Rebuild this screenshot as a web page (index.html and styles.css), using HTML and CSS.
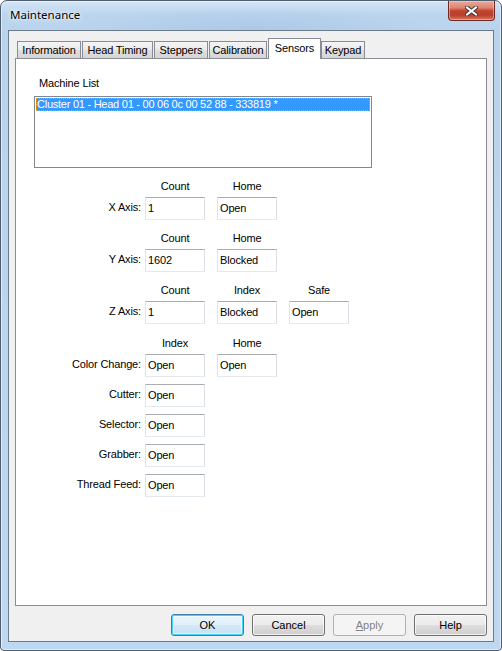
FILE: index.html
```html
<!DOCTYPE html>
<html lang="en">
<head>
<meta charset="utf-8">
<title>Maintenance</title>
<link rel="stylesheet" href="styles.css">
</head>
<body>
<div class="window">
  <div class="titlebar">
    <span class="title">Maintenance</span>
    <button class="close" type="button" aria-label="Close">
      <svg width="13" height="10" viewBox="0 0 13 10">
        <path d="M2 1.5 L11 8.5 M11 1.5 L2 8.5" stroke="#3a3a3a" stroke-width="4" stroke-linecap="square" fill="none"/>
        <path d="M2 1.5 L11 8.5 M11 1.5 L2 8.5" stroke="#ffffff" stroke-width="2" stroke-linecap="square" fill="none"/>
      </svg>
    </button>
  </div>

  <div class="client">
    <div class="tabs">
      <div class="tab tab-info">Information</div>
      <div class="tab tab-timing">Head Timing</div>
      <div class="tab tab-steppers">Steppers</div>
      <div class="tab tab-calib">Calibration</div>
      <div class="tab tab-sensors active">Sensors</div>
      <div class="tab tab-keypad">Keypad</div>
    </div>

    <div class="panel">
      <div class="list-label">Machine List</div>
      <div class="listbox">
        <div class="list-item selected">Cluster 01 - Head 01 - 00 06 0c 00 52 88 - 333819 *</div>
      </div>

      <div class="sensors">
        <div class="group">
          <span class="hdr"></span>
          <span class="hdr">Count</span>
          <span class="hdr">Home</span>
          <label class="lbl">X Axis:</label>
          <input class="field" type="text" value="1" readonly>
          <input class="field" type="text" value="Open" readonly>
        </div>

        <div class="group">
          <span class="hdr"></span>
          <span class="hdr">Count</span>
          <span class="hdr">Home</span>
          <label class="lbl">Y Axis:</label>
          <input class="field" type="text" value="1602" readonly>
          <input class="field" type="text" value="Blocked" readonly>
        </div>

        <div class="group">
          <span class="hdr"></span>
          <span class="hdr">Count</span>
          <span class="hdr">Index</span>
          <span class="hdr">Safe</span>
          <label class="lbl">Z Axis:</label>
          <input class="field" type="text" value="1" readonly>
          <input class="field" type="text" value="Blocked" readonly>
          <input class="field" type="text" value="Open" readonly>
        </div>

        <div class="group group-list">
          <span class="hdr"></span>
          <span class="hdr">Index</span>
          <span class="hdr">Home</span>
          <label class="lbl">Color Change:</label>
          <input class="field" type="text" value="Open" readonly>
          <input class="field" type="text" value="Open" readonly>
          <label class="lbl">Cutter:</label>
          <input class="field" type="text" value="Open" readonly>
          <label class="lbl">Selector:</label>
          <input class="field" type="text" value="Open" readonly>
          <label class="lbl">Grabber:</label>
          <input class="field" type="text" value="Open" readonly>
          <label class="lbl">Thread Feed:</label>
          <input class="field" type="text" value="Open" readonly>
        </div>
      </div>
    </div>

    <div class="buttons">
      <button class="btn btn-default" type="button">OK</button>
      <button class="btn" type="button">Cancel</button>
      <button class="btn" type="button" disabled><u>A</u>pply</button>
      <button class="btn" type="button">Help</button>
    </div>
  </div>
</div>
</body>
</html>
```

FILE: styles.css
```css
* {
  box-sizing: border-box;
}

html, body {
  margin: 0;
  padding: 0;
  background: #ffffff;
}

body {
  font-family: "Liberation Sans", Arial, sans-serif;
  font-size: 11px;
  letter-spacing: -0.15px;
  color: #000;
}

/* ---------- window frame ---------- */
.window {
  width: 502px;
  height: 651px;
  border: 1px solid #4f5d6e;
  border-radius: 7px 7px 4px 4px;
  padding: 0 7px 8px;
  display: flex;
  flex-direction: column;
  background:
    radial-gradient(ellipse 260px 40px at 250px 32px, rgba(150, 185, 220, 0.45), rgba(150, 185, 220, 0) 70%),
    linear-gradient(180deg, #d3e4f6 0px, #bcd5ee 14px, #bad3ec 40px, #bfd8f1 100%);
  box-shadow: inset 0 0 0 1px rgba(255, 255, 255, 0.55);
}

.titlebar {
  height: 29px;
  flex: none;
  display: flex;
  justify-content: space-between;
  align-items: flex-start;
  padding-left: 2px;
}

.title {
  font-family: "Segoe UI", "Noto Sans", sans-serif;
  font-size: 11.5px;
  letter-spacing: 0;
  line-height: 16px;
  padding-top: 6px;
  color: #000;
  text-shadow: 0 0 6px rgba(255, 255, 255, 0.9), 0 0 2px rgba(255, 255, 255, 0.9);
}

.close {
  width: 47px;
  height: 20px;
  margin: 0 -1px 0 0;
  padding: 0;
  border: 1px solid #6e2a22;
  border-top: none;
  border-radius: 0 0 4px 4px;
  display: flex;
  align-items: center;
  justify-content: center;
  background: linear-gradient(180deg, #e9aa9c 0%, #dc8670 35%, #c3412e 52%, #b9402f 75%, #d77a5f 100%);
  box-shadow: inset 0 0 0 1px rgba(255, 220, 210, 0.45);
}

.close svg {
  display: block;
  margin-top: 1px;
}

/* ---------- client area ---------- */
.client {
  height: 612px;
  border: 1px solid #6c7a8c;
  background: #f0f0f0;
  padding: 0 6px;
  display: flex;
  flex-direction: column;
}

/* ---------- tab strip ---------- */
.tabs {
  height: 27px;
  flex: none;
  display: flex;
  align-items: flex-end;
  padding-left: 2px;
  position: relative;
  z-index: 1;
}

.tab {
  height: 17px;
  line-height: 16px;
  text-align: center;
  border: 1px solid #898c95;
  border-bottom: none;
  background: linear-gradient(180deg, #f4f4f4 0%, #ececec 45%, #dedede 55%, #d5d5d5 100%);
  white-space: nowrap;
}

.tab + .tab {
  margin-left: 1px;
}

.tab.active {
  height: 21px;
  margin-bottom: -1px;
  line-height: 18px;
  background: #ffffff;
}

.tab.active + .tab {
  margin-left: 0;
}

.tab-info { width: 64px; }
.tab-timing { width: 71px; }
.tab-steppers { width: 54px; }
.tab-calib { width: 58px; }
.tab-sensors { width: 53px; }
.tab-keypad { width: 44px; }

/* ---------- tab page ---------- */
.panel {
  flex: 1;
  border: 1px solid #898c95;
  background: #ffffff;
  padding: 18px 0 0 18px;
}

.list-label {
  margin-left: 5px;
  line-height: 13px;
}

.listbox {
  margin-top: 6px;
  width: 338px;
  height: 72px;
  border: 1px solid #828790;
  padding: 1px;
  background: #fff;
}

.list-item {
  height: 13px;
  line-height: 13px;
  padding-left: 1px;
  white-space: nowrap;
  letter-spacing: -0.25px;
}

.list-item.selected {
  background: #3399ff;
  color: #ffffff;
  outline: 1px dotted #f0a030;
  outline-offset: -1px;
}

/* ---------- sensor readouts ---------- */
.sensors {
  margin-top: 12px;
  margin-left: -18px;
}

/* label column, then up to three 60px readouts */
.group {
  display: grid;
  grid-template-columns: 117px 60px 60px 60px;
  column-gap: 12px;
  row-gap: 4px;
  align-items: center;
}

.group + .group {
  margin-top: 12px;
}

.group-list {
  row-gap: 7px;
}

.sensors .group-list {
  margin-top: 13px;
}

.group-list .hdr {
  margin-bottom: -3px;
}

.hdr {
  line-height: 13px;
  min-height: 13px;
  text-align: center;
}

.lbl {
  grid-column: 1;
  justify-self: end;
  margin-right: -8px;
  margin-bottom: 2px;
  line-height: 13px;
  white-space: nowrap;
}

.field {
  width: 60px;
  height: 23px;
  margin: 0;
  padding: 0 2px 2px;
  border: 1px solid;
  border-color: #abadb3 #dbdfe6 #e3e9ef #e2e3ea;
  background: #ffffff;
  font-family: "Liberation Sans", Arial, sans-serif;
  font-size: 11px;
  letter-spacing: -0.15px;
  color: #000;
  outline: none;
}

/* ---------- dialog buttons ---------- */
.buttons {
  height: 35px;
  flex: none;
  display: flex;
  justify-content: flex-end;
  align-items: flex-start;
  gap: 8px;
  padding-top: 8px;
}

.btn {
  width: 73px;
  height: 22px;
  margin: 0;
  padding: 0;
  border: 1px solid #707070;
  border-radius: 3px;
  background: linear-gradient(180deg, #f2f2f2 0%, #ebebeb 48%, #dddddd 52%, #cfcfcf 100%);
  box-shadow: inset 0 0 0 1px rgba(255, 255, 255, 0.7);
  font-family: "Liberation Sans", Arial, sans-serif;
  font-size: 11px;
  color: #000;
}

.btn-default {
  border-color: #3c7fb1;
  box-shadow: inset 0 0 0 1px #48d0f7, inset 0 0 0 2px rgba(255, 255, 255, 0.5);
  background: linear-gradient(180deg, #eaf6fd 0%, #e0f0fa 48%, #d4e8f5 52%, #c6dff0 100%);
}

.btn:disabled {
  border-color: #adb2b5;
  background: #f4f4f4;
  box-shadow: none;
  color: #838383;
}

.btn u {
  text-decoration: underline;
}
```
